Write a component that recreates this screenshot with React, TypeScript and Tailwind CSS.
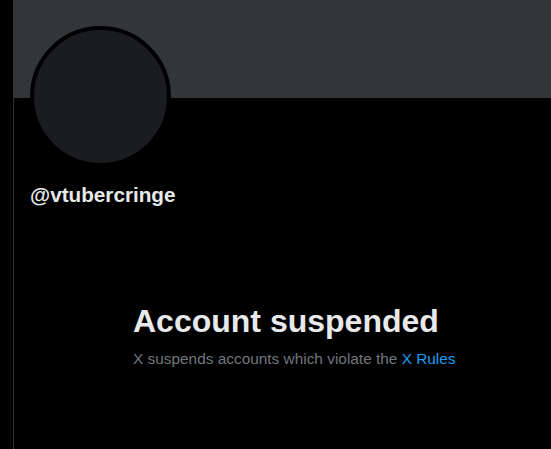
const App = () => {
  return (
    <div
      className="flex min-h-[449px] w-full bg-black"
      style={{ fontFamily: '"Liberation Sans", Arial, sans-serif' }}
    >
      <div className="w-[13px] shrink-0" />
      <main className="flex flex-1 flex-col border-l border-[#2f3336]">
        <div className="h-[98px] bg-[#333639]" />
        <div className="px-4">
          <div className="-mt-[72px] h-[141px] w-[141px] rounded-full border-4 border-black bg-[#1a1c1f]" />
          <div className="mt-[16px] text-[20.7px] font-bold leading-6 text-[#e7e9ea]">
            @vtubercringe
          </div>
        </div>
        <div className="mt-[96px] pl-[119px]">
          <h1 className="text-[32px] font-bold leading-9 text-[#e7e9ea]">
            Account suspended
          </h1>
          <p className="mt-[10px] text-[15.4px] leading-5 text-[#71767b]">
            X suspends accounts which violate the{" "}
            <a className="text-[#1d9bf0]">X Rules</a>
          </p>
        </div>
      </main>
    </div>
  );
};

export default App;
